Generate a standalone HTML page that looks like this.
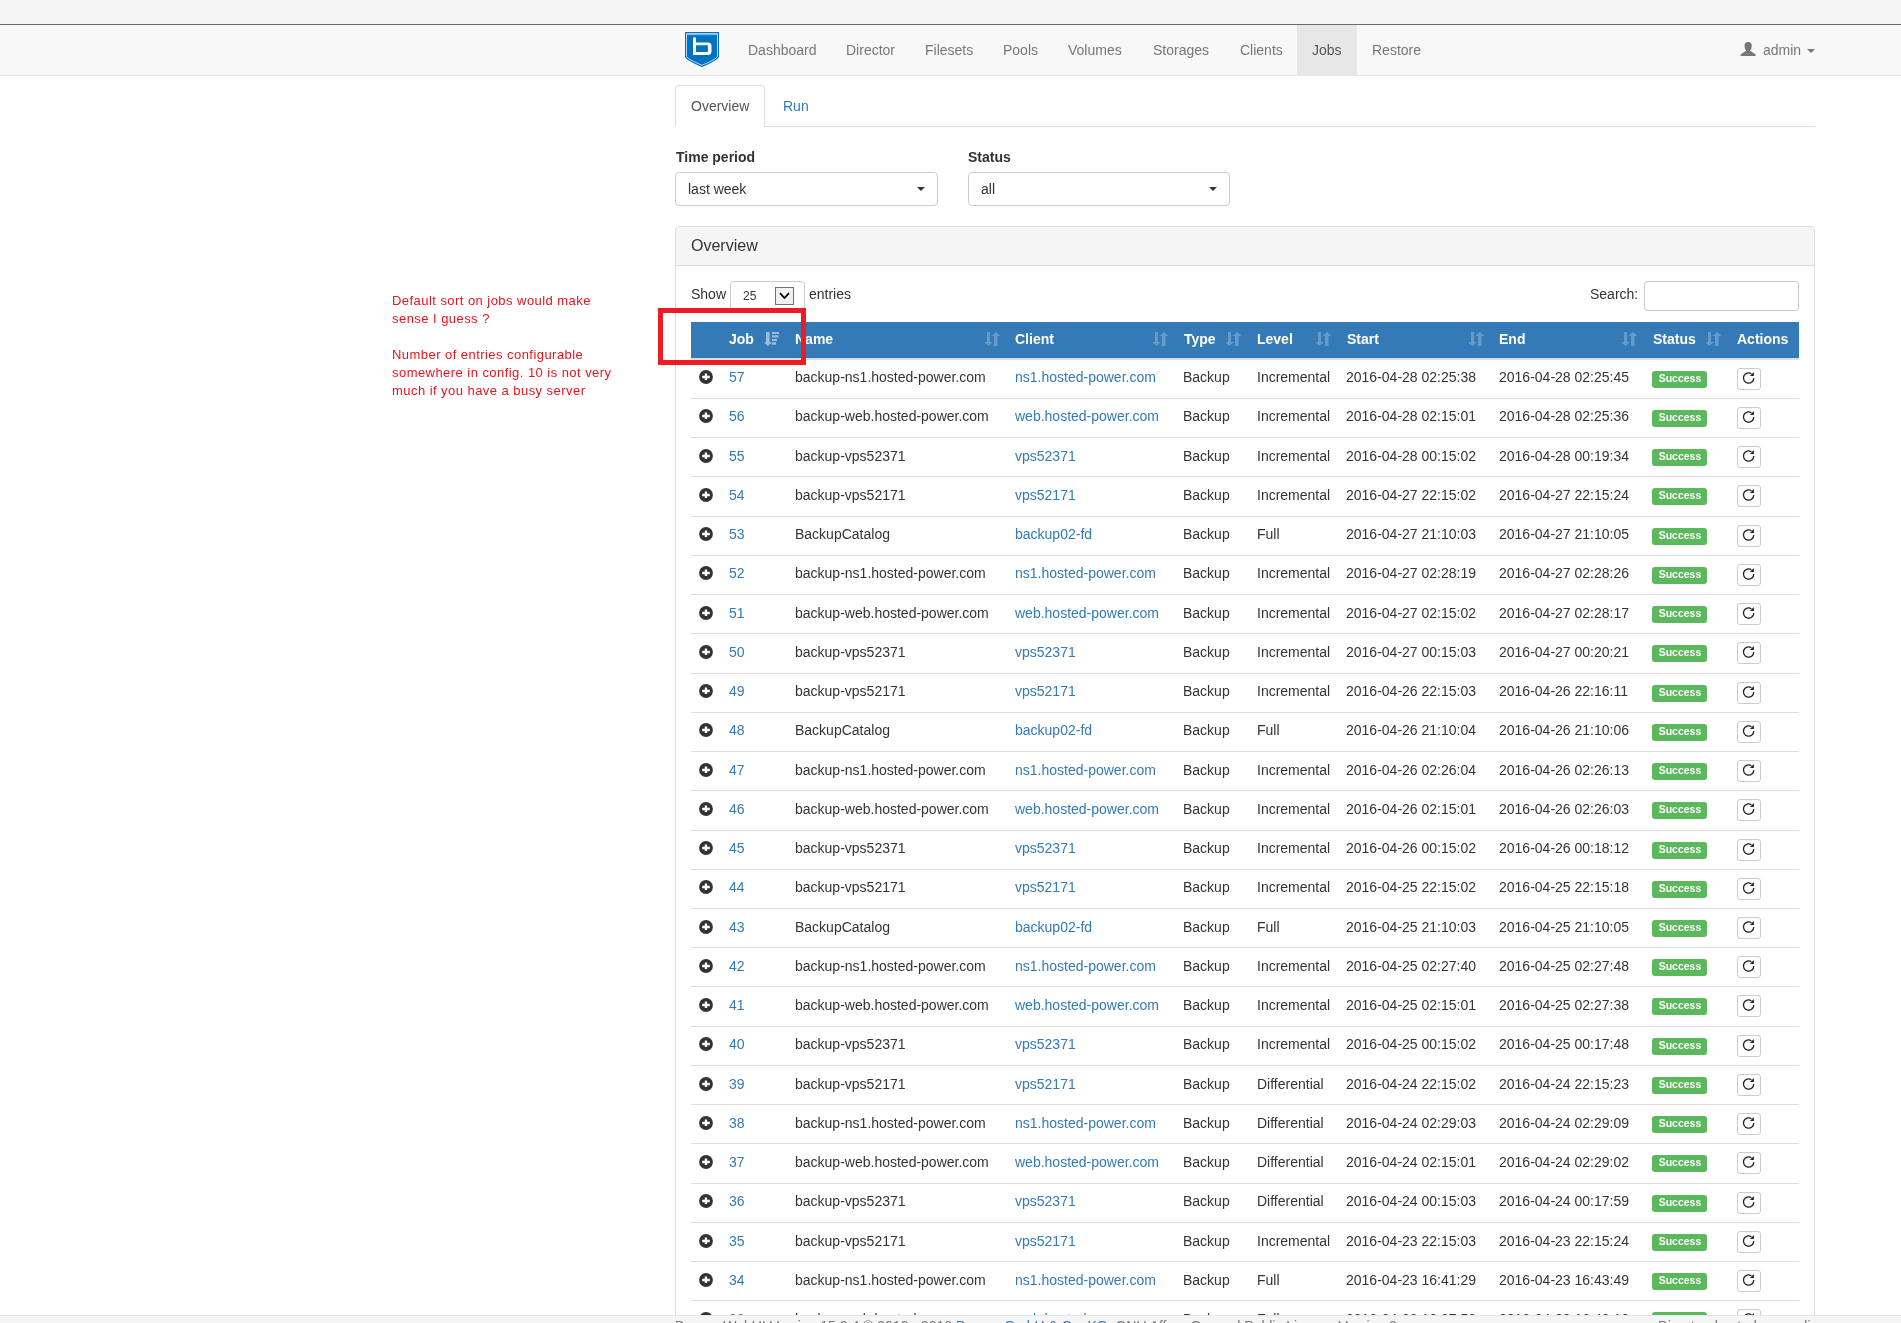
<!DOCTYPE html>
<html><head><meta charset="utf-8"><title>Bareos</title>
<style>
*{box-sizing:border-box}
html,body{margin:0;padding:0}
body{width:1901px;height:1323px;overflow:hidden;position:relative;background:#fff;font-family:"Liberation Sans",sans-serif;font-size:14px;line-height:20px;color:#333}
.ab{position:absolute}
.t{position:absolute;white-space:nowrap;line-height:20px}
.lk{color:#337ab7}
.nav{color:#777}
.hd{color:#fff;font-weight:bold}
.rl{position:absolute;left:691px;width:1108px;height:1px;background:#ddd}
.lbl{position:absolute;left:1652px;width:55px;height:17px;background:#5cb85c;border-radius:3px;color:#fff;font-weight:bold;font-size:10.5px;line-height:15px;text-align:center;padding-left:1px}
.btn{position:absolute;left:1737px;width:24px;height:22px;border:1px solid #ccc;border-radius:3px;background:#fff}
.btn svg{position:absolute;left:-1px;top:-1px}
.pl{position:absolute;left:699px}
.note{position:absolute;left:392px;color:#e8141c;font-size:13px;line-height:18px;white-space:nowrap;letter-spacing:0.45px}
#wrap{position:absolute;left:0;top:0;width:1901px;height:1323px;will-change:transform}
</style></head><body><div id="wrap">

<div class="ab" style="left:0;top:0;width:1901px;height:24px;background:#f5f5f5"></div>
<div class="ab" style="left:0;top:24px;width:1901px;height:1px;background:#6b6b6b"></div>
<div class="ab" style="left:0;top:25px;width:1901px;height:50px;background:#f8f8f8"></div>
<div class="ab" style="left:0;top:75px;width:1901px;height:1px;background:#e7e7e7"></div>
<svg class="ab" style="left:680px;top:28px" width="44" height="44" viewBox="0 0 44 44">
<path fill="#0073c0" d="M5,4H39V28.3C39,31 32,35 22.1,38.9C12,35 5,31 5,28.3Z"/>
<path fill="none" stroke="#cfe3f3" stroke-width="0.9" d="M6.5,5.6H37.5V28C37.5,30 31,33.6 22.1,37.2C13,33.6 6.5,30 6.5,28Z"/>
<rect x="7" y="6" width="30" height="1.2" fill="#7fb6df"/>
<path fill="#fff" d="M13,9.5H16V14.5H27.8Q31.5,14.5 31.5,18.2V23.3Q31.5,27 27.8,27H13Z M16,17.3V24H27.9V17.3Z"/>
</svg>
<div class="ab" style="left:1297px;top:25px;width:60px;height:50px;background:#e7e7e7"></div>
<div class="t" style="left:748px;top:40px;color:#777">Dashboard</div>
<div class="t" style="left:846px;top:40px;color:#777">Director</div>
<div class="t" style="left:925px;top:40px;color:#777">Filesets</div>
<div class="t" style="left:1003px;top:40px;color:#777">Pools</div>
<div class="t" style="left:1068px;top:40px;color:#777">Volumes</div>
<div class="t" style="left:1153px;top:40px;color:#777">Storages</div>
<div class="t" style="left:1240px;top:40px;color:#777">Clients</div>
<div class="t" style="left:1312px;top:40px;color:#555">Jobs</div>
<div class="t" style="left:1372px;top:40px;color:#777">Restore</div>
<svg class="ab" style="left:1740px;top:42px" width="16" height="14" viewBox="0 0 16 14">
<path fill="#777" d="M4.5,3.8Q4.5,0 8.2,0Q11.8,0 11.8,3.8Q11.8,7 10,8.4L15.6,12.6V14H0.6V12.6L6.3,8.4Q4.5,7 4.5,3.8Z"/></svg>
<div class="t" style="left:1763px;top:40px;color:#777">admin</div>
<div class="ab" style="left:1807px;top:49px;width:0;height:0;border-left:4px solid transparent;border-right:4px solid transparent;border-top:4px solid #777"></div>
<div class="ab" style="left:675px;top:126px;width:1140px;height:1px;background:#ddd"></div>
<div class="ab" style="left:675px;top:85px;width:90px;height:42px;border:1px solid #ddd;border-bottom-color:#fff;border-radius:4px 4px 0 0;background:#fff"></div>
<div class="t" style="left:691px;top:96px;color:#555">Overview</div>
<div class="t lk" style="left:783px;top:96px">Run</div>
<div class="t" style="left:676px;top:147px;font-weight:bold">Time period</div>
<div class="t" style="left:968px;top:147px;font-weight:bold">Status</div>
<div class="ab" style="left:675px;top:172px;width:263px;height:34px;border:1px solid #ccc;border-radius:4px;background:#fff"></div>
<div class="t" style="left:688px;top:179px">last week</div>
<div class="ab" style="left:917px;top:187px;width:0;height:0;border-left:4px solid transparent;border-right:4px solid transparent;border-top:4px solid #333"></div>
<div class="ab" style="left:968px;top:172px;width:262px;height:34px;border:1px solid #ccc;border-radius:4px;background:#fff"></div>
<div class="t" style="left:981px;top:179px">all</div>
<div class="ab" style="left:1209px;top:187px;width:0;height:0;border-left:4px solid transparent;border-right:4px solid transparent;border-top:4px solid #333"></div>
<div class="ab" style="left:675px;top:226px;width:1140px;height:1200px;border:1px solid #ddd;border-radius:4px;background:#fff"></div>
<div class="ab" style="left:676px;top:227px;width:1138px;height:38px;background:#f5f5f5;border-radius:3px 3px 0 0"></div>
<div class="ab" style="left:676px;top:265px;width:1138px;height:1px;background:#ddd"></div>
<div class="t" style="left:691px;top:236px;font-size:16px">Overview</div>
<div class="t" style="left:691px;top:284px">Show</div>
<div class="ab" style="left:730px;top:281px;width:75px;height:30px;border:1px solid #ccc;border-radius:4px;background:#fff"></div>
<div class="t" style="left:743px;top:286px;font-size:12px">25</div>
<div class="ab" style="left:775px;top:287px;width:19px;height:18px;border:1px solid #707070;background:#f0f0f0"></div>
<svg class="ab" style="left:779px;top:292px" width="11" height="8" viewBox="0 0 11 8"><path fill="none" stroke="#000" stroke-width="1.8" d="M1,1.2L5.5,6L10,1.2"/></svg>
<div class="t" style="left:809px;top:284px">entries</div>
<div class="t" style="left:1590px;top:284px">Search:</div>
<div class="ab" style="left:1644px;top:281px;width:155px;height:30px;border:1px solid #ccc;border-radius:3px;background:#fff"></div>
<div class="ab" style="left:691px;top:322px;width:1108px;height:36px;background:#337ab7"></div>
<div class="ab" style="left:691px;top:358px;width:1108px;height:2px;background:#ddd"></div>
<div class="t hd" style="left:729px;top:329px">Job</div>
<div class="t hd" style="left:795px;top:329px">Name</div>
<div class="t hd" style="left:1015px;top:329px">Client</div>
<div class="t hd" style="left:1184px;top:329px">Type</div>
<div class="t hd" style="left:1257px;top:329px">Level</div>
<div class="t hd" style="left:1347px;top:329px">Start</div>
<div class="t hd" style="left:1499px;top:329px">End</div>
<div class="t hd" style="left:1653px;top:329px">Status</div>
<div class="t hd" style="left:1737px;top:329px">Actions</div>
<svg class="ab" style="left:764px;top:332px;opacity:0.5" width="15" height="14" viewBox="0 0 15 14"><path fill="#fff" d="M2,0h3.6v10.2h2.6l-4.4,3.8l-4.2,-3.8h2.4z M8,0h7v2h-7z M8,3.3h6.6v2.3h-6.6z M8,7h5v2h-5z M8,10.3h4v2.5h-4z"/></svg>
<svg class="ab" style="left:985px;top:332px;opacity:0.25" width="15" height="14" viewBox="0 0 15 14"><path fill="#fff" d="M2,0h3v10h3l-4.5,4l-4.5,-4h3z M9,14v-10h-2.5l4.5,-4l4.5,4h-3v10z"/></svg>
<svg class="ab" style="left:1153px;top:332px;opacity:0.25" width="15" height="14" viewBox="0 0 15 14"><path fill="#fff" d="M2,0h3v10h3l-4.5,4l-4.5,-4h3z M9,14v-10h-2.5l4.5,-4l4.5,4h-3v10z"/></svg>
<svg class="ab" style="left:1226px;top:332px;opacity:0.25" width="15" height="14" viewBox="0 0 15 14"><path fill="#fff" d="M2,0h3v10h3l-4.5,4l-4.5,-4h3z M9,14v-10h-2.5l4.5,-4l4.5,4h-3v10z"/></svg>
<svg class="ab" style="left:1316px;top:332px;opacity:0.25" width="15" height="14" viewBox="0 0 15 14"><path fill="#fff" d="M2,0h3v10h3l-4.5,4l-4.5,-4h3z M9,14v-10h-2.5l4.5,-4l4.5,4h-3v10z"/></svg>
<svg class="ab" style="left:1469px;top:332px;opacity:0.25" width="15" height="14" viewBox="0 0 15 14"><path fill="#fff" d="M2,0h3v10h3l-4.5,4l-4.5,-4h3z M9,14v-10h-2.5l4.5,-4l4.5,4h-3v10z"/></svg>
<svg class="ab" style="left:1622px;top:332px;opacity:0.25" width="15" height="14" viewBox="0 0 15 14"><path fill="#fff" d="M2,0h3v10h3l-4.5,4l-4.5,-4h3z M9,14v-10h-2.5l4.5,-4l4.5,4h-3v10z"/></svg>
<svg class="ab" style="left:1706px;top:332px;opacity:0.25" width="15" height="14" viewBox="0 0 15 14"><path fill="#fff" d="M2,0h3v10h3l-4.5,4l-4.5,-4h3z M9,14v-10h-2.5l4.5,-4l4.5,4h-3v10z"/></svg>
<div class="pl" style="top:370px"><svg width="14" height="15" viewBox="0 0 14 15"><circle cx="7" cy="7" r="6.9" fill="#333"/><path fill="#fff" d="M5.8,3.6h2.3v2.1h2.7v2.6h-2.7v1.8h-2.3v-1.8h-2.6v-2.6h2.6z"/></svg></div>
<div class="t lk" style="left:729px;top:367px">57</div>
<div class="t" style="left:795px;top:367px">backup-ns1.hosted-power.com</div>
<div class="t lk" style="left:1015px;top:367px">ns1.hosted-power.com</div>
<div class="t" style="left:1183px;top:367px">Backup</div>
<div class="t" style="left:1257px;top:367px">Incremental</div>
<div class="t" style="left:1346px;top:367px">2016-04-28 02:25:38</div>
<div class="t" style="left:1499px;top:367px">2016-04-28 02:25:45</div>
<div class="lbl" style="top:371px">Success</div>
<div class="btn" style="top:368px"><svg width="24" height="22" viewBox="0 0 24 22"><path fill="none" stroke="#222" stroke-width="1.35" d="M16.75,10A5.15,5.15 0 1 1 14.4,5.7"/><path fill="#222" d="M16.9,3.9V7.9H12.9z"/></svg></div>
<div class="rl" style="top:398px"></div>
<div class="pl" style="top:409px"><svg width="14" height="15" viewBox="0 0 14 15"><circle cx="7" cy="7" r="6.9" fill="#333"/><path fill="#fff" d="M5.8,3.6h2.3v2.1h2.7v2.6h-2.7v1.8h-2.3v-1.8h-2.6v-2.6h2.6z"/></svg></div>
<div class="t lk" style="left:729px;top:406px">56</div>
<div class="t" style="left:795px;top:406px">backup-web.hosted-power.com</div>
<div class="t lk" style="left:1015px;top:406px">web.hosted-power.com</div>
<div class="t" style="left:1183px;top:406px">Backup</div>
<div class="t" style="left:1257px;top:406px">Incremental</div>
<div class="t" style="left:1346px;top:406px">2016-04-28 02:15:01</div>
<div class="t" style="left:1499px;top:406px">2016-04-28 02:25:36</div>
<div class="lbl" style="top:410px">Success</div>
<div class="btn" style="top:407px"><svg width="24" height="22" viewBox="0 0 24 22"><path fill="none" stroke="#222" stroke-width="1.35" d="M16.75,10A5.15,5.15 0 1 1 14.4,5.7"/><path fill="#222" d="M16.9,3.9V7.9H12.9z"/></svg></div>
<div class="rl" style="top:437px"></div>
<div class="pl" style="top:449px"><svg width="14" height="15" viewBox="0 0 14 15"><circle cx="7" cy="7" r="6.9" fill="#333"/><path fill="#fff" d="M5.8,3.6h2.3v2.1h2.7v2.6h-2.7v1.8h-2.3v-1.8h-2.6v-2.6h2.6z"/></svg></div>
<div class="t lk" style="left:729px;top:446px">55</div>
<div class="t" style="left:795px;top:446px">backup-vps52371</div>
<div class="t lk" style="left:1015px;top:446px">vps52371</div>
<div class="t" style="left:1183px;top:446px">Backup</div>
<div class="t" style="left:1257px;top:446px">Incremental</div>
<div class="t" style="left:1346px;top:446px">2016-04-28 00:15:02</div>
<div class="t" style="left:1499px;top:446px">2016-04-28 00:19:34</div>
<div class="lbl" style="top:449px">Success</div>
<div class="btn" style="top:446px"><svg width="24" height="22" viewBox="0 0 24 22"><path fill="none" stroke="#222" stroke-width="1.35" d="M16.75,10A5.15,5.15 0 1 1 14.4,5.7"/><path fill="#222" d="M16.9,3.9V7.9H12.9z"/></svg></div>
<div class="rl" style="top:476px"></div>
<div class="pl" style="top:488px"><svg width="14" height="15" viewBox="0 0 14 15"><circle cx="7" cy="7" r="6.9" fill="#333"/><path fill="#fff" d="M5.8,3.6h2.3v2.1h2.7v2.6h-2.7v1.8h-2.3v-1.8h-2.6v-2.6h2.6z"/></svg></div>
<div class="t lk" style="left:729px;top:485px">54</div>
<div class="t" style="left:795px;top:485px">backup-vps52171</div>
<div class="t lk" style="left:1015px;top:485px">vps52171</div>
<div class="t" style="left:1183px;top:485px">Backup</div>
<div class="t" style="left:1257px;top:485px">Incremental</div>
<div class="t" style="left:1346px;top:485px">2016-04-27 22:15:02</div>
<div class="t" style="left:1499px;top:485px">2016-04-27 22:15:24</div>
<div class="lbl" style="top:488px">Success</div>
<div class="btn" style="top:485px"><svg width="24" height="22" viewBox="0 0 24 22"><path fill="none" stroke="#222" stroke-width="1.35" d="M16.75,10A5.15,5.15 0 1 1 14.4,5.7"/><path fill="#222" d="M16.9,3.9V7.9H12.9z"/></svg></div>
<div class="rl" style="top:516px"></div>
<div class="pl" style="top:527px"><svg width="14" height="15" viewBox="0 0 14 15"><circle cx="7" cy="7" r="6.9" fill="#333"/><path fill="#fff" d="M5.8,3.6h2.3v2.1h2.7v2.6h-2.7v1.8h-2.3v-1.8h-2.6v-2.6h2.6z"/></svg></div>
<div class="t lk" style="left:729px;top:524px">53</div>
<div class="t" style="left:795px;top:524px">BackupCatalog</div>
<div class="t lk" style="left:1015px;top:524px">backup02-fd</div>
<div class="t" style="left:1183px;top:524px">Backup</div>
<div class="t" style="left:1257px;top:524px">Full</div>
<div class="t" style="left:1346px;top:524px">2016-04-27 21:10:03</div>
<div class="t" style="left:1499px;top:524px">2016-04-27 21:10:05</div>
<div class="lbl" style="top:528px">Success</div>
<div class="btn" style="top:525px"><svg width="24" height="22" viewBox="0 0 24 22"><path fill="none" stroke="#222" stroke-width="1.35" d="M16.75,10A5.15,5.15 0 1 1 14.4,5.7"/><path fill="#222" d="M16.9,3.9V7.9H12.9z"/></svg></div>
<div class="rl" style="top:555px"></div>
<div class="pl" style="top:566px"><svg width="14" height="15" viewBox="0 0 14 15"><circle cx="7" cy="7" r="6.9" fill="#333"/><path fill="#fff" d="M5.8,3.6h2.3v2.1h2.7v2.6h-2.7v1.8h-2.3v-1.8h-2.6v-2.6h2.6z"/></svg></div>
<div class="t lk" style="left:729px;top:563px">52</div>
<div class="t" style="left:795px;top:563px">backup-ns1.hosted-power.com</div>
<div class="t lk" style="left:1015px;top:563px">ns1.hosted-power.com</div>
<div class="t" style="left:1183px;top:563px">Backup</div>
<div class="t" style="left:1257px;top:563px">Incremental</div>
<div class="t" style="left:1346px;top:563px">2016-04-27 02:28:19</div>
<div class="t" style="left:1499px;top:563px">2016-04-27 02:28:26</div>
<div class="lbl" style="top:567px">Success</div>
<div class="btn" style="top:564px"><svg width="24" height="22" viewBox="0 0 24 22"><path fill="none" stroke="#222" stroke-width="1.35" d="M16.75,10A5.15,5.15 0 1 1 14.4,5.7"/><path fill="#222" d="M16.9,3.9V7.9H12.9z"/></svg></div>
<div class="rl" style="top:594px"></div>
<div class="pl" style="top:606px"><svg width="14" height="15" viewBox="0 0 14 15"><circle cx="7" cy="7" r="6.9" fill="#333"/><path fill="#fff" d="M5.8,3.6h2.3v2.1h2.7v2.6h-2.7v1.8h-2.3v-1.8h-2.6v-2.6h2.6z"/></svg></div>
<div class="t lk" style="left:729px;top:603px">51</div>
<div class="t" style="left:795px;top:603px">backup-web.hosted-power.com</div>
<div class="t lk" style="left:1015px;top:603px">web.hosted-power.com</div>
<div class="t" style="left:1183px;top:603px">Backup</div>
<div class="t" style="left:1257px;top:603px">Incremental</div>
<div class="t" style="left:1346px;top:603px">2016-04-27 02:15:02</div>
<div class="t" style="left:1499px;top:603px">2016-04-27 02:28:17</div>
<div class="lbl" style="top:606px">Success</div>
<div class="btn" style="top:603px"><svg width="24" height="22" viewBox="0 0 24 22"><path fill="none" stroke="#222" stroke-width="1.35" d="M16.75,10A5.15,5.15 0 1 1 14.4,5.7"/><path fill="#222" d="M16.9,3.9V7.9H12.9z"/></svg></div>
<div class="rl" style="top:633px"></div>
<div class="pl" style="top:645px"><svg width="14" height="15" viewBox="0 0 14 15"><circle cx="7" cy="7" r="6.9" fill="#333"/><path fill="#fff" d="M5.8,3.6h2.3v2.1h2.7v2.6h-2.7v1.8h-2.3v-1.8h-2.6v-2.6h2.6z"/></svg></div>
<div class="t lk" style="left:729px;top:642px">50</div>
<div class="t" style="left:795px;top:642px">backup-vps52371</div>
<div class="t lk" style="left:1015px;top:642px">vps52371</div>
<div class="t" style="left:1183px;top:642px">Backup</div>
<div class="t" style="left:1257px;top:642px">Incremental</div>
<div class="t" style="left:1346px;top:642px">2016-04-27 00:15:03</div>
<div class="t" style="left:1499px;top:642px">2016-04-27 00:20:21</div>
<div class="lbl" style="top:645px">Success</div>
<div class="btn" style="top:642px"><svg width="24" height="22" viewBox="0 0 24 22"><path fill="none" stroke="#222" stroke-width="1.35" d="M16.75,10A5.15,5.15 0 1 1 14.4,5.7"/><path fill="#222" d="M16.9,3.9V7.9H12.9z"/></svg></div>
<div class="rl" style="top:673px"></div>
<div class="pl" style="top:684px"><svg width="14" height="15" viewBox="0 0 14 15"><circle cx="7" cy="7" r="6.9" fill="#333"/><path fill="#fff" d="M5.8,3.6h2.3v2.1h2.7v2.6h-2.7v1.8h-2.3v-1.8h-2.6v-2.6h2.6z"/></svg></div>
<div class="t lk" style="left:729px;top:681px">49</div>
<div class="t" style="left:795px;top:681px">backup-vps52171</div>
<div class="t lk" style="left:1015px;top:681px">vps52171</div>
<div class="t" style="left:1183px;top:681px">Backup</div>
<div class="t" style="left:1257px;top:681px">Incremental</div>
<div class="t" style="left:1346px;top:681px">2016-04-26 22:15:03</div>
<div class="t" style="left:1499px;top:681px">2016-04-26 22:16:11</div>
<div class="lbl" style="top:685px">Success</div>
<div class="btn" style="top:682px"><svg width="24" height="22" viewBox="0 0 24 22"><path fill="none" stroke="#222" stroke-width="1.35" d="M16.75,10A5.15,5.15 0 1 1 14.4,5.7"/><path fill="#222" d="M16.9,3.9V7.9H12.9z"/></svg></div>
<div class="rl" style="top:712px"></div>
<div class="pl" style="top:723px"><svg width="14" height="15" viewBox="0 0 14 15"><circle cx="7" cy="7" r="6.9" fill="#333"/><path fill="#fff" d="M5.8,3.6h2.3v2.1h2.7v2.6h-2.7v1.8h-2.3v-1.8h-2.6v-2.6h2.6z"/></svg></div>
<div class="t lk" style="left:729px;top:720px">48</div>
<div class="t" style="left:795px;top:720px">BackupCatalog</div>
<div class="t lk" style="left:1015px;top:720px">backup02-fd</div>
<div class="t" style="left:1183px;top:720px">Backup</div>
<div class="t" style="left:1257px;top:720px">Full</div>
<div class="t" style="left:1346px;top:720px">2016-04-26 21:10:04</div>
<div class="t" style="left:1499px;top:720px">2016-04-26 21:10:06</div>
<div class="lbl" style="top:724px">Success</div>
<div class="btn" style="top:721px"><svg width="24" height="22" viewBox="0 0 24 22"><path fill="none" stroke="#222" stroke-width="1.35" d="M16.75,10A5.15,5.15 0 1 1 14.4,5.7"/><path fill="#222" d="M16.9,3.9V7.9H12.9z"/></svg></div>
<div class="rl" style="top:751px"></div>
<div class="pl" style="top:763px"><svg width="14" height="15" viewBox="0 0 14 15"><circle cx="7" cy="7" r="6.9" fill="#333"/><path fill="#fff" d="M5.8,3.6h2.3v2.1h2.7v2.6h-2.7v1.8h-2.3v-1.8h-2.6v-2.6h2.6z"/></svg></div>
<div class="t lk" style="left:729px;top:760px">47</div>
<div class="t" style="left:795px;top:760px">backup-ns1.hosted-power.com</div>
<div class="t lk" style="left:1015px;top:760px">ns1.hosted-power.com</div>
<div class="t" style="left:1183px;top:760px">Backup</div>
<div class="t" style="left:1257px;top:760px">Incremental</div>
<div class="t" style="left:1346px;top:760px">2016-04-26 02:26:04</div>
<div class="t" style="left:1499px;top:760px">2016-04-26 02:26:13</div>
<div class="lbl" style="top:763px">Success</div>
<div class="btn" style="top:760px"><svg width="24" height="22" viewBox="0 0 24 22"><path fill="none" stroke="#222" stroke-width="1.35" d="M16.75,10A5.15,5.15 0 1 1 14.4,5.7"/><path fill="#222" d="M16.9,3.9V7.9H12.9z"/></svg></div>
<div class="rl" style="top:790px"></div>
<div class="pl" style="top:802px"><svg width="14" height="15" viewBox="0 0 14 15"><circle cx="7" cy="7" r="6.9" fill="#333"/><path fill="#fff" d="M5.8,3.6h2.3v2.1h2.7v2.6h-2.7v1.8h-2.3v-1.8h-2.6v-2.6h2.6z"/></svg></div>
<div class="t lk" style="left:729px;top:799px">46</div>
<div class="t" style="left:795px;top:799px">backup-web.hosted-power.com</div>
<div class="t lk" style="left:1015px;top:799px">web.hosted-power.com</div>
<div class="t" style="left:1183px;top:799px">Backup</div>
<div class="t" style="left:1257px;top:799px">Incremental</div>
<div class="t" style="left:1346px;top:799px">2016-04-26 02:15:01</div>
<div class="t" style="left:1499px;top:799px">2016-04-26 02:26:03</div>
<div class="lbl" style="top:802px">Success</div>
<div class="btn" style="top:799px"><svg width="24" height="22" viewBox="0 0 24 22"><path fill="none" stroke="#222" stroke-width="1.35" d="M16.75,10A5.15,5.15 0 1 1 14.4,5.7"/><path fill="#222" d="M16.9,3.9V7.9H12.9z"/></svg></div>
<div class="rl" style="top:830px"></div>
<div class="pl" style="top:841px"><svg width="14" height="15" viewBox="0 0 14 15"><circle cx="7" cy="7" r="6.9" fill="#333"/><path fill="#fff" d="M5.8,3.6h2.3v2.1h2.7v2.6h-2.7v1.8h-2.3v-1.8h-2.6v-2.6h2.6z"/></svg></div>
<div class="t lk" style="left:729px;top:838px">45</div>
<div class="t" style="left:795px;top:838px">backup-vps52371</div>
<div class="t lk" style="left:1015px;top:838px">vps52371</div>
<div class="t" style="left:1183px;top:838px">Backup</div>
<div class="t" style="left:1257px;top:838px">Incremental</div>
<div class="t" style="left:1346px;top:838px">2016-04-26 00:15:02</div>
<div class="t" style="left:1499px;top:838px">2016-04-26 00:18:12</div>
<div class="lbl" style="top:842px">Success</div>
<div class="btn" style="top:839px"><svg width="24" height="22" viewBox="0 0 24 22"><path fill="none" stroke="#222" stroke-width="1.35" d="M16.75,10A5.15,5.15 0 1 1 14.4,5.7"/><path fill="#222" d="M16.9,3.9V7.9H12.9z"/></svg></div>
<div class="rl" style="top:869px"></div>
<div class="pl" style="top:880px"><svg width="14" height="15" viewBox="0 0 14 15"><circle cx="7" cy="7" r="6.9" fill="#333"/><path fill="#fff" d="M5.8,3.6h2.3v2.1h2.7v2.6h-2.7v1.8h-2.3v-1.8h-2.6v-2.6h2.6z"/></svg></div>
<div class="t lk" style="left:729px;top:877px">44</div>
<div class="t" style="left:795px;top:877px">backup-vps52171</div>
<div class="t lk" style="left:1015px;top:877px">vps52171</div>
<div class="t" style="left:1183px;top:877px">Backup</div>
<div class="t" style="left:1257px;top:877px">Incremental</div>
<div class="t" style="left:1346px;top:877px">2016-04-25 22:15:02</div>
<div class="t" style="left:1499px;top:877px">2016-04-25 22:15:18</div>
<div class="lbl" style="top:881px">Success</div>
<div class="btn" style="top:878px"><svg width="24" height="22" viewBox="0 0 24 22"><path fill="none" stroke="#222" stroke-width="1.35" d="M16.75,10A5.15,5.15 0 1 1 14.4,5.7"/><path fill="#222" d="M16.9,3.9V7.9H12.9z"/></svg></div>
<div class="rl" style="top:908px"></div>
<div class="pl" style="top:920px"><svg width="14" height="15" viewBox="0 0 14 15"><circle cx="7" cy="7" r="6.9" fill="#333"/><path fill="#fff" d="M5.8,3.6h2.3v2.1h2.7v2.6h-2.7v1.8h-2.3v-1.8h-2.6v-2.6h2.6z"/></svg></div>
<div class="t lk" style="left:729px;top:917px">43</div>
<div class="t" style="left:795px;top:917px">BackupCatalog</div>
<div class="t lk" style="left:1015px;top:917px">backup02-fd</div>
<div class="t" style="left:1183px;top:917px">Backup</div>
<div class="t" style="left:1257px;top:917px">Full</div>
<div class="t" style="left:1346px;top:917px">2016-04-25 21:10:03</div>
<div class="t" style="left:1499px;top:917px">2016-04-25 21:10:05</div>
<div class="lbl" style="top:920px">Success</div>
<div class="btn" style="top:917px"><svg width="24" height="22" viewBox="0 0 24 22"><path fill="none" stroke="#222" stroke-width="1.35" d="M16.75,10A5.15,5.15 0 1 1 14.4,5.7"/><path fill="#222" d="M16.9,3.9V7.9H12.9z"/></svg></div>
<div class="rl" style="top:947px"></div>
<div class="pl" style="top:959px"><svg width="14" height="15" viewBox="0 0 14 15"><circle cx="7" cy="7" r="6.9" fill="#333"/><path fill="#fff" d="M5.8,3.6h2.3v2.1h2.7v2.6h-2.7v1.8h-2.3v-1.8h-2.6v-2.6h2.6z"/></svg></div>
<div class="t lk" style="left:729px;top:956px">42</div>
<div class="t" style="left:795px;top:956px">backup-ns1.hosted-power.com</div>
<div class="t lk" style="left:1015px;top:956px">ns1.hosted-power.com</div>
<div class="t" style="left:1183px;top:956px">Backup</div>
<div class="t" style="left:1257px;top:956px">Incremental</div>
<div class="t" style="left:1346px;top:956px">2016-04-25 02:27:40</div>
<div class="t" style="left:1499px;top:956px">2016-04-25 02:27:48</div>
<div class="lbl" style="top:959px">Success</div>
<div class="btn" style="top:956px"><svg width="24" height="22" viewBox="0 0 24 22"><path fill="none" stroke="#222" stroke-width="1.35" d="M16.75,10A5.15,5.15 0 1 1 14.4,5.7"/><path fill="#222" d="M16.9,3.9V7.9H12.9z"/></svg></div>
<div class="rl" style="top:986px"></div>
<div class="pl" style="top:998px"><svg width="14" height="15" viewBox="0 0 14 15"><circle cx="7" cy="7" r="6.9" fill="#333"/><path fill="#fff" d="M5.8,3.6h2.3v2.1h2.7v2.6h-2.7v1.8h-2.3v-1.8h-2.6v-2.6h2.6z"/></svg></div>
<div class="t lk" style="left:729px;top:995px">41</div>
<div class="t" style="left:795px;top:995px">backup-web.hosted-power.com</div>
<div class="t lk" style="left:1015px;top:995px">web.hosted-power.com</div>
<div class="t" style="left:1183px;top:995px">Backup</div>
<div class="t" style="left:1257px;top:995px">Incremental</div>
<div class="t" style="left:1346px;top:995px">2016-04-25 02:15:01</div>
<div class="t" style="left:1499px;top:995px">2016-04-25 02:27:38</div>
<div class="lbl" style="top:998px">Success</div>
<div class="btn" style="top:995px"><svg width="24" height="22" viewBox="0 0 24 22"><path fill="none" stroke="#222" stroke-width="1.35" d="M16.75,10A5.15,5.15 0 1 1 14.4,5.7"/><path fill="#222" d="M16.9,3.9V7.9H12.9z"/></svg></div>
<div class="rl" style="top:1026px"></div>
<div class="pl" style="top:1037px"><svg width="14" height="15" viewBox="0 0 14 15"><circle cx="7" cy="7" r="6.9" fill="#333"/><path fill="#fff" d="M5.8,3.6h2.3v2.1h2.7v2.6h-2.7v1.8h-2.3v-1.8h-2.6v-2.6h2.6z"/></svg></div>
<div class="t lk" style="left:729px;top:1034px">40</div>
<div class="t" style="left:795px;top:1034px">backup-vps52371</div>
<div class="t lk" style="left:1015px;top:1034px">vps52371</div>
<div class="t" style="left:1183px;top:1034px">Backup</div>
<div class="t" style="left:1257px;top:1034px">Incremental</div>
<div class="t" style="left:1346px;top:1034px">2016-04-25 00:15:02</div>
<div class="t" style="left:1499px;top:1034px">2016-04-25 00:17:48</div>
<div class="lbl" style="top:1038px">Success</div>
<div class="btn" style="top:1035px"><svg width="24" height="22" viewBox="0 0 24 22"><path fill="none" stroke="#222" stroke-width="1.35" d="M16.75,10A5.15,5.15 0 1 1 14.4,5.7"/><path fill="#222" d="M16.9,3.9V7.9H12.9z"/></svg></div>
<div class="rl" style="top:1065px"></div>
<div class="pl" style="top:1077px"><svg width="14" height="15" viewBox="0 0 14 15"><circle cx="7" cy="7" r="6.9" fill="#333"/><path fill="#fff" d="M5.8,3.6h2.3v2.1h2.7v2.6h-2.7v1.8h-2.3v-1.8h-2.6v-2.6h2.6z"/></svg></div>
<div class="t lk" style="left:729px;top:1074px">39</div>
<div class="t" style="left:795px;top:1074px">backup-vps52171</div>
<div class="t lk" style="left:1015px;top:1074px">vps52171</div>
<div class="t" style="left:1183px;top:1074px">Backup</div>
<div class="t" style="left:1257px;top:1074px">Differential</div>
<div class="t" style="left:1346px;top:1074px">2016-04-24 22:15:02</div>
<div class="t" style="left:1499px;top:1074px">2016-04-24 22:15:23</div>
<div class="lbl" style="top:1077px">Success</div>
<div class="btn" style="top:1074px"><svg width="24" height="22" viewBox="0 0 24 22"><path fill="none" stroke="#222" stroke-width="1.35" d="M16.75,10A5.15,5.15 0 1 1 14.4,5.7"/><path fill="#222" d="M16.9,3.9V7.9H12.9z"/></svg></div>
<div class="rl" style="top:1104px"></div>
<div class="pl" style="top:1116px"><svg width="14" height="15" viewBox="0 0 14 15"><circle cx="7" cy="7" r="6.9" fill="#333"/><path fill="#fff" d="M5.8,3.6h2.3v2.1h2.7v2.6h-2.7v1.8h-2.3v-1.8h-2.6v-2.6h2.6z"/></svg></div>
<div class="t lk" style="left:729px;top:1113px">38</div>
<div class="t" style="left:795px;top:1113px">backup-ns1.hosted-power.com</div>
<div class="t lk" style="left:1015px;top:1113px">ns1.hosted-power.com</div>
<div class="t" style="left:1183px;top:1113px">Backup</div>
<div class="t" style="left:1257px;top:1113px">Differential</div>
<div class="t" style="left:1346px;top:1113px">2016-04-24 02:29:03</div>
<div class="t" style="left:1499px;top:1113px">2016-04-24 02:29:09</div>
<div class="lbl" style="top:1116px">Success</div>
<div class="btn" style="top:1113px"><svg width="24" height="22" viewBox="0 0 24 22"><path fill="none" stroke="#222" stroke-width="1.35" d="M16.75,10A5.15,5.15 0 1 1 14.4,5.7"/><path fill="#222" d="M16.9,3.9V7.9H12.9z"/></svg></div>
<div class="rl" style="top:1143px"></div>
<div class="pl" style="top:1155px"><svg width="14" height="15" viewBox="0 0 14 15"><circle cx="7" cy="7" r="6.9" fill="#333"/><path fill="#fff" d="M5.8,3.6h2.3v2.1h2.7v2.6h-2.7v1.8h-2.3v-1.8h-2.6v-2.6h2.6z"/></svg></div>
<div class="t lk" style="left:729px;top:1152px">37</div>
<div class="t" style="left:795px;top:1152px">backup-web.hosted-power.com</div>
<div class="t lk" style="left:1015px;top:1152px">web.hosted-power.com</div>
<div class="t" style="left:1183px;top:1152px">Backup</div>
<div class="t" style="left:1257px;top:1152px">Differential</div>
<div class="t" style="left:1346px;top:1152px">2016-04-24 02:15:01</div>
<div class="t" style="left:1499px;top:1152px">2016-04-24 02:29:02</div>
<div class="lbl" style="top:1155px">Success</div>
<div class="btn" style="top:1152px"><svg width="24" height="22" viewBox="0 0 24 22"><path fill="none" stroke="#222" stroke-width="1.35" d="M16.75,10A5.15,5.15 0 1 1 14.4,5.7"/><path fill="#222" d="M16.9,3.9V7.9H12.9z"/></svg></div>
<div class="rl" style="top:1183px"></div>
<div class="pl" style="top:1194px"><svg width="14" height="15" viewBox="0 0 14 15"><circle cx="7" cy="7" r="6.9" fill="#333"/><path fill="#fff" d="M5.8,3.6h2.3v2.1h2.7v2.6h-2.7v1.8h-2.3v-1.8h-2.6v-2.6h2.6z"/></svg></div>
<div class="t lk" style="left:729px;top:1191px">36</div>
<div class="t" style="left:795px;top:1191px">backup-vps52371</div>
<div class="t lk" style="left:1015px;top:1191px">vps52371</div>
<div class="t" style="left:1183px;top:1191px">Backup</div>
<div class="t" style="left:1257px;top:1191px">Differential</div>
<div class="t" style="left:1346px;top:1191px">2016-04-24 00:15:03</div>
<div class="t" style="left:1499px;top:1191px">2016-04-24 00:17:59</div>
<div class="lbl" style="top:1195px">Success</div>
<div class="btn" style="top:1192px"><svg width="24" height="22" viewBox="0 0 24 22"><path fill="none" stroke="#222" stroke-width="1.35" d="M16.75,10A5.15,5.15 0 1 1 14.4,5.7"/><path fill="#222" d="M16.9,3.9V7.9H12.9z"/></svg></div>
<div class="rl" style="top:1222px"></div>
<div class="pl" style="top:1234px"><svg width="14" height="15" viewBox="0 0 14 15"><circle cx="7" cy="7" r="6.9" fill="#333"/><path fill="#fff" d="M5.8,3.6h2.3v2.1h2.7v2.6h-2.7v1.8h-2.3v-1.8h-2.6v-2.6h2.6z"/></svg></div>
<div class="t lk" style="left:729px;top:1231px">35</div>
<div class="t" style="left:795px;top:1231px">backup-vps52171</div>
<div class="t lk" style="left:1015px;top:1231px">vps52171</div>
<div class="t" style="left:1183px;top:1231px">Backup</div>
<div class="t" style="left:1257px;top:1231px">Incremental</div>
<div class="t" style="left:1346px;top:1231px">2016-04-23 22:15:03</div>
<div class="t" style="left:1499px;top:1231px">2016-04-23 22:15:24</div>
<div class="lbl" style="top:1234px">Success</div>
<div class="btn" style="top:1231px"><svg width="24" height="22" viewBox="0 0 24 22"><path fill="none" stroke="#222" stroke-width="1.35" d="M16.75,10A5.15,5.15 0 1 1 14.4,5.7"/><path fill="#222" d="M16.9,3.9V7.9H12.9z"/></svg></div>
<div class="rl" style="top:1261px"></div>
<div class="pl" style="top:1273px"><svg width="14" height="15" viewBox="0 0 14 15"><circle cx="7" cy="7" r="6.9" fill="#333"/><path fill="#fff" d="M5.8,3.6h2.3v2.1h2.7v2.6h-2.7v1.8h-2.3v-1.8h-2.6v-2.6h2.6z"/></svg></div>
<div class="t lk" style="left:729px;top:1270px">34</div>
<div class="t" style="left:795px;top:1270px">backup-ns1.hosted-power.com</div>
<div class="t lk" style="left:1015px;top:1270px">ns1.hosted-power.com</div>
<div class="t" style="left:1183px;top:1270px">Backup</div>
<div class="t" style="left:1257px;top:1270px">Full</div>
<div class="t" style="left:1346px;top:1270px">2016-04-23 16:41:29</div>
<div class="t" style="left:1499px;top:1270px">2016-04-23 16:43:49</div>
<div class="lbl" style="top:1273px">Success</div>
<div class="btn" style="top:1270px"><svg width="24" height="22" viewBox="0 0 24 22"><path fill="none" stroke="#222" stroke-width="1.35" d="M16.75,10A5.15,5.15 0 1 1 14.4,5.7"/><path fill="#222" d="M16.9,3.9V7.9H12.9z"/></svg></div>
<div class="rl" style="top:1300px"></div>
<div class="pl" style="top:1312px"><svg width="14" height="15" viewBox="0 0 14 15"><circle cx="7" cy="7" r="6.9" fill="#333"/><path fill="#fff" d="M5.8,3.6h2.3v2.1h2.7v2.6h-2.7v1.8h-2.3v-1.8h-2.6v-2.6h2.6z"/></svg></div>
<div class="t lk" style="left:729px;top:1309px">33</div>
<div class="t" style="left:795px;top:1309px">backup-web.hosted-power.com</div>
<div class="t lk" style="left:1015px;top:1309px">web.hosted-power.com</div>
<div class="t" style="left:1183px;top:1309px">Backup</div>
<div class="t" style="left:1257px;top:1309px">Full</div>
<div class="t" style="left:1346px;top:1309px">2016-04-23 16:37:53</div>
<div class="t" style="left:1499px;top:1309px">2016-04-23 16:40:16</div>
<div class="lbl" style="top:1312px">Success</div>
<div class="btn" style="top:1309px"><svg width="24" height="22" viewBox="0 0 24 22"><path fill="none" stroke="#222" stroke-width="1.35" d="M16.75,10A5.15,5.15 0 1 1 14.4,5.7"/><path fill="#222" d="M16.9,3.9V7.9H12.9z"/></svg></div>
<div class="ab" style="left:658px;top:308px;width:148px;height:57px;border:5px solid #ed1c24"></div>
<div class="note" style="top:292px">Default sort on jobs would make<br>sense I guess ?</div>
<div class="note" style="top:346px">Number of entries configurable<br>somewhere in config. 10 is not very<br>much if you have a busy server</div>
<div class="ab" style="left:0;top:1315px;width:1901px;height:8px;background:#f5f5f5;border-top:1px solid #e7e7e7"></div>
<div class="t" style="left:675px;top:1316px;color:#777;font-size:14px">Bareos WebUI Version 15.2.4 &copy; 2013 - 2016 <span class="lk">Bareos GmbH &amp; Co. KG</span>, GNU Affero General Public License Version 3</div>
<div class="t" style="left:1658px;top:1316px;color:#777">Director: hostedpower-dir</div>
</div></body></html>
